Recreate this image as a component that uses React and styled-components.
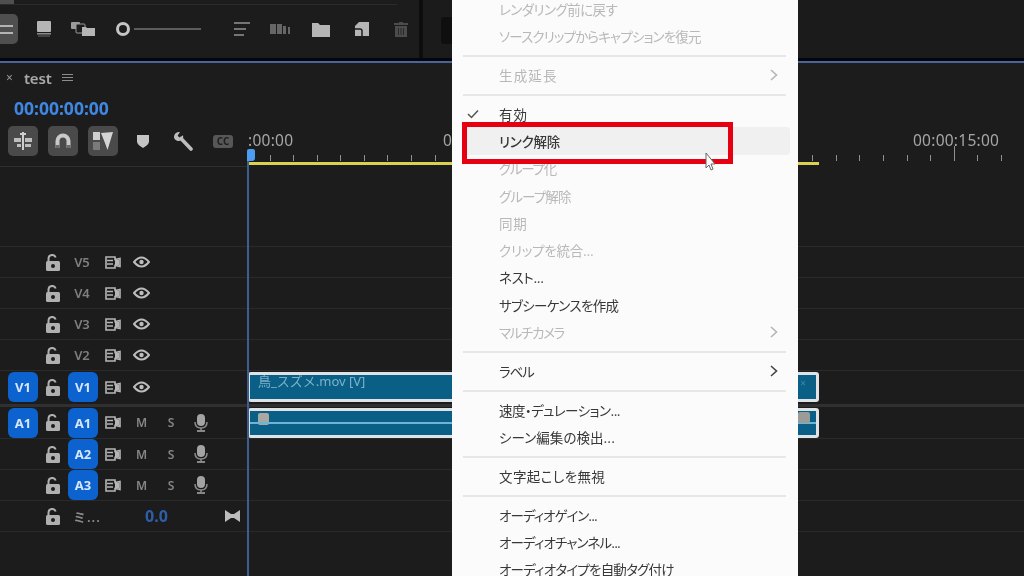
import styled, { createGlobalStyle } from 'styled-components';

const GlobalStyle = createGlobalStyle`
  html, body {
    margin: 0;
    padding: 0;
    background: #1c1c1c;
  }
  * {
    box-sizing: border-box;
  }
`;

const Page = styled.div`
  position: relative;
  width: 1024px;
  height: 576px;
  overflow: hidden;
  background: #1c1c1c;
  font-family: 'Noto Sans', 'Noto Sans CJK JP', sans-serif;
  filter: blur(0.35px);
`;

/* top panels */
const TopPanels = styled.div`
  display: flex;
  height: 58px;
  gap: 4px;
  background: #0d0d0d;
`;

const BinPanel = styled.div`
  display: flex;
  flex-direction: column;
  width: 419px;
  background: #1c1c1c;
`;

const BinStrip = styled.div`
  height: 5px;
  margin-right: 22px;
  border-bottom: 1px solid #2b2b2b;
`;

const BinCorner = styled.div`
  width: 14px;
  height: 4px;
  background: #4f4f4f;
`;

const BinToolbar = styled.div`
  display: flex;
  align-items: center;
  height: 40px;
  padding-top: 8px;
`;

const ViewButton = styled.div`
  display: flex;
  flex-direction: column;
  justify-content: center;
  gap: 5px;
  width: 18px;
  height: 30px;
  padding-right: 5px;
  background: #4f4f4f;
  border-radius: 0 5px 5px 0;
`;

const ViewLine = styled.div`
  height: 2px;
  background: #b4b4b4;
`;

const ToolSlot = styled.div`
  display: flex;
  flex: 0 0 auto;
  margin-left: ${(p) => p.$gap}px;
`;

const ZoomSlider = styled.div`
  display: flex;
  align-items: center;
  margin-left: 20px;
`;

const SliderKnob = styled.div`
  width: 14px;
  height: 14px;
  border: 3px solid #c4c4c4;
  border-radius: 50%;
`;

const SliderTrack = styled.div`
  width: 67px;
  height: 2px;
  margin-left: 4px;
  background: #5c5c5c;
`;

const ProgramPanel = styled.div`
  flex: 1;
  display: flex;
  align-items: center;
  padding: 2px 0 0 18px;
  background: #1b1b1b;
`;

const ProgramButton = styled.div`
  width: 14px;
  height: 27px;
  background: #0f0f0f;
  border-radius: 3px;
`;

const PanelRule = styled.div`
  height: 5px;
  background: #050510;
  border-bottom: 2px solid #4a6596;
`;

/* sequence head */
const TabBar = styled.div`
  display: flex;
  align-items: center;
  height: 29px;
  padding-left: 6px;
  color: #a9a9a9;
`;

const TabClose = styled.span`
  font-size: 12px;
  color: #9a9a9a;
`;

const TabName = styled.span`
  margin-left: 11px;
  font-size: 15px;
  font-weight: 600;
  color: #a8a8a8;
  letter-spacing: -0.1px;
`;

const TabMenu = styled.div`
  display: flex;
  flex-direction: column;
  gap: 2px;
  width: 11px;
  margin-left: 10px;
`;

const TabMenuLine = styled.div`
  height: 1px;
  background: #8c8c8c;
`;

const Timecode = styled.div`
  height: 33px;
  padding: 5px 0 0 14px;
  font-size: 17.5px;
  font-weight: 700;
  line-height: 22px;
  color: #3f87e2;
`;

const ToolRow = styled.div`
  display: flex;
  height: 42px;
`;

const ToolBox = styled.div`
  display: flex;
  align-items: flex-start;
  width: 248px;
  padding: 1px 0 0 8px;
  border-bottom: 1px solid #2e2e2e;
`;

const SnapButton = styled.div`
  display: flex;
  align-items: center;
  justify-content: center;
  width: 30px;
  height: 30px;
  margin-right: 10px;
  background: #4a4a4a;
  border-radius: 5px;
`;

const PlainTool = styled.div`
  display: flex;
  align-items: center;
  justify-content: center;
  width: 30px;
  height: 30px;
  margin-right: ${(p) => p.$gap ?? 10}px;
`;

const CcBadge = styled.span`
  display: block;
  width: 20px;
  height: 13px;
  background: #575757;
  border-radius: 3px;
  color: #1f1f1f;
  font-size: 10px;
  font-weight: 700;
  line-height: 13px;
  text-align: center;
`;

const Ruler = styled.div`
  flex: 1;
  display: flex;
  flex-direction: column;
  overflow: hidden;
`;

const RulerLabels = styled.div`
  display: flex;
  height: 23px;
  padding-top: 6px;
`;

const RulerLabel = styled.span`
  flex: 0 0 ${(p) => p.$w}px;
  font-size: 15.5px;
  line-height: 18px;
  letter-spacing: 0.25px;
  color: #a6a6a6;
  white-space: nowrap;
`;

const TickRow = styled.div`
  display: flex;
  align-items: flex-end;
  height: 13px;
  padding-left: 21.5px;
`;

const TickCell = styled.div`
  flex: 0 0 23.6px;
`;

const Tick = styled.div`
  width: 1px;
  height: ${(p) => (p.$big ? 15 : 6)}px;
  background: #8f8f8f;
`;

const WorkBar = styled.div`
  width: 571px;
  height: 3px;
  margin-top: 1px;
  background: #d8d24f;
`;

/* tracks */
const EmptyRow = styled.div`
  height: 80px;
  border-bottom: 1px solid #2a2a2a;
`;

const Row = styled.div`
  display: flex;
  height: ${(p) => p.$h || 31}px;
  border-bottom: 1px solid ${(p) => (p.$line ? 'transparent' : '#2a2a2a')};
`;

const Divider = styled.div`
  height: 3px;
  background: #303030;
`;

const Header = styled.div`
  display: grid;
  grid-template-columns: 30px 30px 30px 29px 29px 30px 30px 1fr;
  align-items: center;
  justify-items: center;
  width: 248px;
  padding-left: 8px;
`;

const Patch = styled.div`
  display: flex;
  align-items: center;
  justify-content: center;
  grid-column: ${(p) => p.$col};
  width: 30px;
  height: 30px;
  background: #0c62cf;
  border-radius: 6px;
  color: #d6e6fb;
  font-size: 13px;
  font-weight: 700;
`;

const Cell = styled.div`
  display: flex;
  align-items: center;
  justify-content: center;
  grid-column: ${(p) => p.$col};
`;

const TrackName = styled.span`
  margin-right: 2px;
  font-size: 13px;
  font-weight: 600;
  color: #7f7f7f;
`;

const MuteLetter = styled.span`
  font-size: 12px;
  font-weight: 600;
  color: #858585;
`;

const MixName = styled.span`
  grid-column: 3;
  justify-self: start;
  margin-left: 5px;
  font-size: 13px;
  font-weight: 600;
  letter-spacing: 1px;
  color: #8c8c8c;
  white-space: nowrap;
`;

const MixValue = styled.span`
  grid-column: 5 / span 2;
  justify-self: start;
  margin-left: 18px;
  font-size: 16px;
  font-weight: 700;
  color: #2f5ea8;
`;

const MixEnd = styled.div`
  grid-column: 8;
  justify-self: end;
  display: flex;
  margin-right: 8px;
`;

const Lane = styled.div`
  flex: 1;
  display: flex;
  align-items: center;
`;

const Clip = styled.div`
  position: relative;
  display: flex;
  align-items: ${(p) => (p.$audio ? 'center' : 'flex-start')};
  width: 571px;
  height: 30px;
  padding-left: 8px;
  background: #0a5f87;
  border: solid #dfe3e6;
  border-width: 3px 3px 3px 2px;
  border-radius: 3px;
  overflow: hidden;
`;

const ClipName = styled.span`
  font-size: 13px;
  line-height: 13px;
  color: #7fb2ca;
  white-space: nowrap;
`;

const FxBadge = styled.div`
  flex: 0 0 auto;
  width: 11px;
  height: 12px;
  margin-bottom: 7px;
  background: #a9a9a4;
  border-radius: 2px;
`;

const Wave = styled.div`
  position: absolute;
  left: 0;
  right: 0;
  top: 11px;
  height: 2px;
  background: #6fb4d4;
`;

const ClipEndBadge = styled.div`
  position: absolute;
  right: 6px;
  top: 1px;
  width: 12px;
  height: 11px;
  background: #9b9b98;
  border-radius: 2px;
`;

const ClipX = styled.span`
  position: absolute;
  right: 10px;
  top: 1px;
  font-size: 10px;
  color: #3e89ab;
`;

/* overlays */
const Playhead = styled.div`
  position: absolute;
  left: 247px;
  top: 160px;
  width: 2px;
  height: 416px;
  background: #3d5f8f;
`;

const PlayheadCap = styled.div`
  position: absolute;
  left: 247px;
  top: 149px;
  width: 8px;
  height: 12px;
  background: #4c9df2;
  border-radius: 2px 2px 3px 0;
`;

const Menu = styled.div`
  position: absolute;
  left: 452px;
  top: -4.9px;
  width: 346px;
  padding: 0 12px 0 11px;
  background: #fbfbfb;
  font-family: 'Noto Sans CJK JP', 'Noto Sans', sans-serif;
`;

const Item = styled.div`
  display: flex;
  align-items: center;
  height: 27.25px;
  margin-right: ${(p) => (p.$active ? -4 : 0)}px;
  background: ${(p) => (p.$active ? '#f0f0f0' : 'transparent')};
  border-radius: 4px;
  font-size: 13.5px;
  font-weight: ${(p) => (p.$active ? 500 : 400)};
  font-feature-settings: 'palt';
  letter-spacing: ${(p) => p.$track}px;
  color: ${(p) => (p.$off ? '#b8b8b8' : '#383838')};
`;

const CheckSlot = styled.div`
  display: flex;
  flex: 0 0 36px;
  padding-left: 4px;
`;

const ItemLabel = styled.span`
  flex: 1;
  white-space: nowrap;
`;

const ItemArrow = styled.div`
  display: flex;
  margin-right: 8px;
`;

const MenuSep = styled.div`
  height: 2px;
  margin: 5.8px 0 3.9px;
  background: #e7e7e7;
`;

const RedBox = styled.div`
  position: absolute;
  left: 462px;
  top: 122px;
  width: 271px;
  height: 42px;
  border: 5px solid #e60012;
`;

const Pointer = styled.svg`
  position: absolute;
  left: 704px;
  top: 152px;
`;

const grey = '#b5b5b5';

const Doc = () => (
  <svg width="16" height="18" viewBox="0 0 16 18">
    <rect x="1" y="1" width="14" height="11" rx="1" fill={grey} />
    <rect x="1" y="13" width="14" height="1.5" fill="#8a8a8a" />
    <rect x="2" y="15.5" width="12" height="1" fill="#666" />
  </svg>
);

const Stack = () => (
  <svg width="26" height="16" viewBox="0 0 26 16">
    <rect x="1" y="1" width="9" height="7" rx="1" fill="#9a9a9a" />
    <rect x="6" y="3" width="9" height="9" rx="1" fill="#1c1c1c" stroke="#9a9a9a" />
    <path d="M12 6h4l1 1h8v8H12z" fill={grey} />
  </svg>
);

const ListLines = () => (
  <svg width="18" height="16" viewBox="0 0 18 16">
    <path d="M1 2h16M1 8h12M1 14h10" stroke="#757575" strokeWidth="2" />
  </svg>
);

const Bars = () => (
  <svg width="21" height="12" viewBox="0 0 21 12">
    <path d="M0 1h6v10H0zM7 1h5v10H7zM13 3h3v8h-3zM18 4h2v7h-2z" fill="#666" />
  </svg>
);

const Folder = () => (
  <svg width="18" height="15" viewBox="0 0 18 15">
    <path d="M0 1h6l2 2h10v12H0z" fill={grey} />
  </svg>
);

const NewItem = () => (
  <svg width="16" height="16" viewBox="0 0 16 16">
    <path d="M5 1h10v14H1V5z" fill={grey} />
    <path d="M1 8h5q2 0 2 2v5" fill="none" stroke="#1c1c1c" strokeWidth="1.5" />
  </svg>
);

const Trash = () => (
  <svg width="14" height="16" viewBox="0 0 14 16">
    <path d="M5 1h4v1h5v2H0V2h5zM1 5h12v11H1z" fill="#4c4c4c" />
    <path d="M4.5 7v7M7 7v7M9.5 7v7" stroke="#2a2a2a" />
  </svg>
);

const Insert = () => (
  <svg width="20" height="18" viewBox="0 0 20 18">
    <path d="M10 0v18" stroke="#cfcfcf" strokeWidth="2" />
    <path d="M1 6h7v4H1zM12 6h7v4h-7zM4 12h4v3H4zM12 12h6v3h-6z" fill="#bdbdbd" />
    <path d="M7 2h6" stroke="#cfcfcf" strokeWidth="2" />
  </svg>
);

const Magnet = () => (
  <svg width="18" height="16" viewBox="0 0 18 16">
    <path d="M3.500 15V8a5.500 5.500 0 0 1 11 0v7" fill="none" stroke="#c9c9c9" strokeWidth="4" />
    <path d="M1.500 12h4v3h-4zM12.500 12h4v3h-4z" fill="#6b6b6b" />
  </svg>
);

const Linked = () => (
  <svg width="22" height="20" viewBox="0 0 22 20">
    <rect x="1" y="1" width="7" height="8" fill="#cfcfcf" />
    <rect x="1" y="11" width="7" height="8" fill="#7b7b7b" />
    <path d="M9 2 21 1 15.500 19 13 12z" fill="#d4d4d4" />
  </svg>
);

const Marker = () => (
  <svg width="12" height="13" viewBox="0 0 12 13">
    <path d="M0 0h12v6.500q0 3-6 6.500q-6-3.500-6-6.500z" fill="#c4c4c4" />
  </svg>
);

const Wrench = () => (
  <svg width="20" height="20" viewBox="0 0 20 20">
    <path d="M8 7.500 18 18" stroke="#bdbdbd" strokeWidth="3.600" strokeLinecap="round" />
    <path d="M7 1a5 5 0 0 0-5.800 6.200 5 5 0 0 0 6.600 2.400l2-2a5 5 0 0 0 .2-3.400L6.800 6.800 4.600 4.800z" fill="#bdbdbd" />
  </svg>
);

const Lock = () => (
  <svg width="14" height="17" viewBox="0 0 14 17">
    <path d="M2.500 8V4.500a3.700 3.700 0 0 1 7.200-1" fill="none" stroke="#b0b0b0" strokeWidth="2" />
    <rect y="7" width="14" height="10" rx="1.500" fill="#b0b0b0" />
    <circle cx="7" cy="12" r="2" fill="#1c1c1c" />
  </svg>
);

const SyncIcon = () => (
  <svg width="16" height="13" viewBox="0 0 16 13">
    <path d="M1 1h9v2.500l5-1v8l-5-1V12H1z" fill="none" stroke="#b5b5b5" strokeWidth="1.600" />
    <path d="M2 4.500h6M2 8h6" stroke="#b5b5b5" strokeWidth="1.500" />
    <path d="M10 4l4-.5v6L10 9z" fill="#b5b5b5" />
  </svg>
);

const Eye = () => (
  <svg width="17" height="12" viewBox="0 0 17 12">
    <path d="M1 6q7.500-9 15 0q-7.500 9-15 0z" fill="none" stroke="#bdbdbd" strokeWidth="2" />
    <circle cx="8.500" cy="6" r="2.200" fill="#bdbdbd" />
  </svg>
);

const Mic = () => (
  <svg width="14" height="18" viewBox="0 0 14 18">
    <rect x="3" y="0" width="8" height="12" rx="4" fill="#a3a3a3" />
    <path d="M1 8q0 6 6 6t6-6" fill="none" stroke="#8a8a8a" strokeWidth="1.500" />
    <path d="M3 17h8" stroke="#a3a3a3" strokeWidth="1.600" />
    <path d="M7 14v3" stroke="#8a8a8a" strokeWidth="1.500" />
  </svg>
);

const BowTie = () => (
  <svg width="15" height="12" viewBox="0 0 15 12">
    <path d="M0 0l6 4 3 0 6-4v12l-6-4-3 0-6 4z" fill="#bdbdbd" />
  </svg>
);

const Check = () => (
  <svg width="12" height="10" viewBox="0 0 12 10">
    <path d="M1 5l3.500 3.500L11 1.500" fill="none" stroke="#555" strokeWidth="1.500" />
  </svg>
);

const Arrow = ({ off }) => (
  <svg width="8" height="12" viewBox="0 0 8 12">
    <path d="M1 1l5.500 5L1 11" fill="none" stroke={off ? '#b5b5b5' : '#444'} strokeWidth="1.600" />
  </svg>
);

const videoTracks = ['V5', 'V4', 'V3', 'V2'];
const audioTracks = ['A2', 'A3'];

// track = letter spacing per row, the source font sets kana much tighter than kanji
const menuGroups = [
  [
    { label: 'レンダリング前に戻す', off: true, track: -0.55 },
    { label: 'ソースクリップからキャプションを復元', off: true, track: -0.85 },
  ],
  [{ label: '生成延長', off: true, sub: true, track: 1.15 }],
  [
    { label: '有効', checked: true, track: 1.1 },
    { label: 'リンク解除', active: true, track: -0.25 },
    { label: 'グループ化', off: true, track: -1.25 },
    { label: 'グループ解除', off: true, track: -0.85 },
    { label: '同期', off: true, track: 0.65 },
    { label: 'クリップを統合...', off: true, track: -0.25 },
    { label: 'ネスト...', track: -0.35 },
    { label: 'サブシーケンスを作成', track: -0.65 },
    { label: 'マルチカメラ', off: true, sub: true, track: -1.35 },
  ],
  [{ label: 'ラベル', sub: true, track: -1.15 }],
  [
    { label: '速度・デュレーション...', track: -0.55 },
    { label: 'シーン編集の検出...', track: 0.05 },
  ],
  [{ label: '文字起こしを無視', track: 0.4 }],
  [
    { label: 'オーディオゲイン...', track: -0.95 },
    { label: 'オーディオチャンネル...', track: -0.85 },
    { label: 'オーディオタイプを自動タグ付け', track: -0.8 },
  ],
];

const AudioControls = () => (
  <>
    <Cell $col={4}>
      <SyncIcon />
    </Cell>
    <Cell $col={5}>
      <MuteLetter>M</MuteLetter>
    </Cell>
    <Cell $col={6}>
      <MuteLetter>S</MuteLetter>
    </Cell>
    <Cell $col={7}>
      <Mic />
    </Cell>
  </>
);

const VideoControls = () => (
  <>
    <Cell $col={4}>
      <SyncIcon />
    </Cell>
    <Cell $col={5}>
      <Eye />
    </Cell>
  </>
);

export default function App() {
  return (
    <Page>
      <GlobalStyle />
      <TopPanels>
        <BinPanel>
          <BinStrip>
            <BinCorner />
          </BinStrip>
          <BinToolbar>
            <ViewButton>
              <ViewLine />
              <ViewLine />
            </ViewButton>
            <ToolSlot $gap={18}>
              <Doc />
            </ToolSlot>
            <ToolSlot $gap={18}>
              <Stack />
            </ToolSlot>
            <ZoomSlider>
              <SliderKnob />
              <SliderTrack />
            </ZoomSlider>
            <ToolSlot $gap={32}>
              <ListLines />
            </ToolSlot>
            <ToolSlot $gap={19}>
              <Bars />
            </ToolSlot>
            <ToolSlot $gap={21}>
              <Folder />
            </ToolSlot>
            <ToolSlot $gap={24}>
              <NewItem />
            </ToolSlot>
            <ToolSlot $gap={24}>
              <Trash />
            </ToolSlot>
          </BinToolbar>
        </BinPanel>
        <ProgramPanel>
          <ProgramButton />
        </ProgramPanel>
      </TopPanels>
      <PanelRule />

      <TabBar>
        <TabClose>×</TabClose>
        <TabName>test</TabName>
        <TabMenu>
          <TabMenuLine />
          <TabMenuLine />
          <TabMenuLine />
        </TabMenu>
      </TabBar>
      <Timecode>00:00:00:00</Timecode>

      <ToolRow>
        <ToolBox>
          <SnapButton>
            <Insert />
          </SnapButton>
          <SnapButton>
            <Magnet />
          </SnapButton>
          <SnapButton>
            <Linked />
          </SnapButton>
          <PlainTool>
            <Marker />
          </PlainTool>
          <PlainTool>
            <Wrench />
          </PlainTool>
          <PlainTool $gap={0}>
            <CcBadge>CC</CcBadge>
          </PlainTool>
        </ToolBox>
        <Ruler>
          <RulerLabels>
            <RulerLabel $w={195}>:00:00</RulerLabel>
            <RulerLabel $w={235}>00:00:05:00</RulerLabel>
            <RulerLabel $w={235}>00:00:10:00</RulerLabel>
            <RulerLabel $w={235}>00:00:15:00</RulerLabel>
          </RulerLabels>
          <TickRow>
            {Array.from({ length: 33 }, (_, i) => (
              <TickCell key={i}>
                <Tick $big={i === 29} />
              </TickCell>
            ))}
          </TickRow>
          <WorkBar />
        </Ruler>
      </ToolRow>

      <EmptyRow />

      {videoTracks.map((name) => (
        <Row key={name}>
          <Header>
            <Cell $col={2}>
              <Lock />
            </Cell>
            <Cell $col={3}>
              <TrackName>{name}</TrackName>
            </Cell>
            <VideoControls />
          </Header>
          <Lane />
        </Row>
      ))}

      <Row $h={33} $line>
        <Header>
          <Patch $col={1}>V1</Patch>
          <Cell $col={2}>
            <Lock />
          </Cell>
          <Patch $col={3}>V1</Patch>
          <VideoControls />
        </Header>
        <Lane>
          <Clip>
            <ClipName>鳥_スズメ.mov [V]</ClipName>
            <ClipX>×</ClipX>
          </Clip>
        </Lane>
      </Row>
      <Divider />
      <Row $h={32}>
        <Header>
          <Patch $col={1}>A1</Patch>
          <Cell $col={2}>
            <Lock />
          </Cell>
          <Patch $col={3}>A1</Patch>
          <AudioControls />
        </Header>
        <Lane>
          <Clip $audio>
            <Wave />
            <FxBadge />
            <ClipEndBadge />
          </Clip>
        </Lane>
      </Row>
      {audioTracks.map((name) => (
        <Row key={name}>
          <Header>
            <Cell $col={2}>
              <Lock />
            </Cell>
            <Patch $col={3}>{name}</Patch>
            <AudioControls />
          </Header>
          <Lane />
        </Row>
      ))}
      <Row>
        <Header>
          <Cell $col={2}>
            <Lock />
          </Cell>
          <MixName>ミ...</MixName>
          <MixValue>0.0</MixValue>
          <MixEnd>
            <BowTie />
          </MixEnd>
        </Header>
        <Lane />
      </Row>

      <Playhead />
      <PlayheadCap />

      <Menu>
        {menuGroups.map((group, g) => (
          <div key={g}>
            {g > 0 && <MenuSep />}
            {group.map((item) => (
              <Item key={item.label} $off={item.off} $active={item.active} $track={item.track}>
                <CheckSlot>{item.checked && <Check />}</CheckSlot>
                <ItemLabel>{item.label}</ItemLabel>
                {item.sub && (
                  <ItemArrow>
                    <Arrow off={item.off} />
                  </ItemArrow>
                )}
              </Item>
            ))}
          </div>
        ))}
      </Menu>

      <RedBox />
      <Pointer width="14" height="22" viewBox="0 0 14 22">
        <path d="M2 1v15l3-3 2 5 2-1-2-5h4z" fill="#fbfbfb" stroke="#666" strokeWidth="1" />
      </Pointer>
    </Page>
  );
}
